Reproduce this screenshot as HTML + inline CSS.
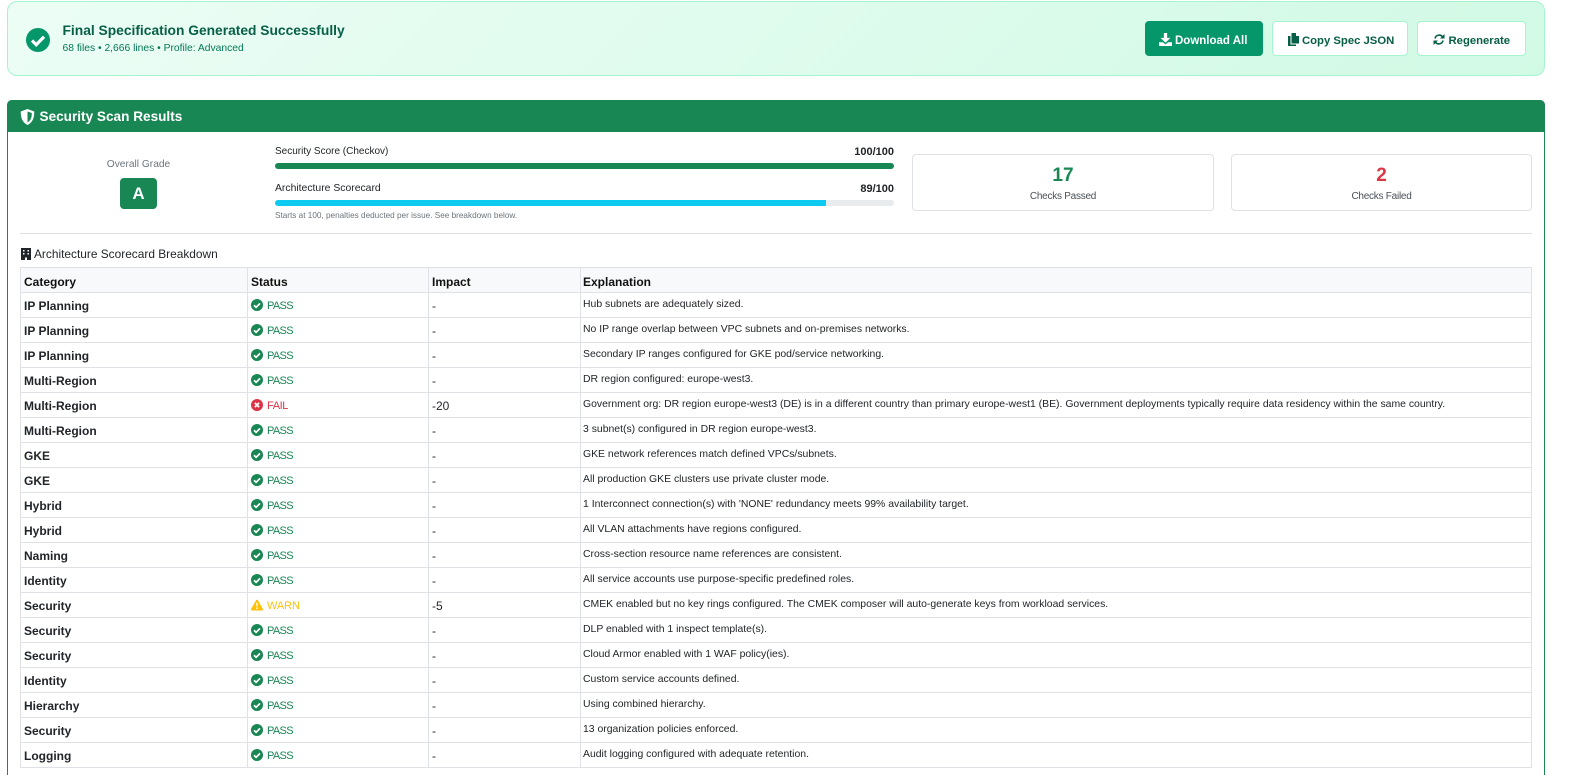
<!DOCTYPE html>
<html lang="en"><head><meta charset="utf-8"><title>Security Scan Results</title>
<style>
*{box-sizing:border-box}
html,body{margin:0;padding:0;width:1574px;height:775px;overflow:hidden;background:#fff;font-family:"Liberation Sans",sans-serif;color:#212529}
#root{position:relative;width:1574px;height:775px;overflow:hidden;background:#fff}
.a{position:absolute;white-space:nowrap}
#banner{left:7px;top:1px;width:1538px;height:75px;border:1px solid #a7f3d0;border-radius:10px;background:linear-gradient(135deg,#ecfdf5,#d1fae5)}
.btn{position:absolute;top:21px;height:35px;border-radius:4px;font-weight:bold;line-height:35px;white-space:nowrap;color:#065f46;background:#fff;border:1px solid #a7f3d0}
.btn svg{position:absolute;top:11px}
.btn span{position:absolute;top:1.5px}
#card{left:7px;top:100px;width:1538px;height:675px;border:1px solid #198754;border-bottom:0;border-radius:5px 5px 0 0}
#head{left:7px;top:100px;width:1538px;height:32px;background:#198754;border-radius:5px 5px 0 0}
.bar{position:absolute;height:6px;border-radius:3px;left:275px;width:619px;background:#e9ecef;overflow:hidden}
.bar i{display:block;height:6px}
.stat{position:absolute;top:154px;height:57px;border:1px solid #dee2e6;border-radius:4px;text-align:center}
.stat b{position:absolute;left:0;right:0;top:10px;font-size:19px;line-height:22px}
.stat span{position:absolute;left:0;right:0;top:34.5px;font-size:10px;letter-spacing:-.25px;line-height:14px;color:#495057}
table{position:absolute;left:20px;top:267px;width:1512px;border-collapse:collapse;table-layout:fixed;font-size:10.43px}
tr{height:25px}
td,th{border:1px solid #dee2e6;padding:0 3px;height:25px;line-height:14px;text-align:left;white-space:nowrap;overflow:hidden}
th{background:#f8f9fa;font-size:12px;color:#111;padding-top:3px}
td:nth-child(-n+3){padding-top:2px}
td:first-child{font-weight:bold;font-size:12px;color:#212529}
td:nth-child(3){font-size:12px}
.p{color:#198754;font-size:11px;letter-spacing:-.65px}.f{color:#dc3545;font-size:11px;letter-spacing:-.4px}.w{color:#ffc107;font-size:11px;letter-spacing:-.1px}
td svg{vertical-align:-2px;margin-right:4px;width:12px;height:12px}
td.w svg{width:14px;margin-right:3px;margin-left:-1px}
</style></head><body><div id="root">
<svg width="0" height="0" style="position:absolute"><defs>
<symbol id="ok" viewBox="0 0 24 24"><circle cx="12" cy="12" r="12" fill="#198754"/><path d="M6 12.5l4.2 4.2L18 8.8" fill="none" stroke="#fff" stroke-width="3.4"/></symbol>
<symbol id="no" viewBox="0 0 24 24"><circle cx="12" cy="12" r="12" fill="#dc3545"/><path d="M7.8 7.8l8.4 8.4M16.2 7.800l-8.4 8.4" fill="none" stroke="#fff" stroke-width="3.4"/></symbol>
<symbol id="wa" viewBox="0 0 24 24"><path d="M12 1.5c.8 0 1.4.4 1.8 1l10 17.5c.8 1.4-.2 3-1.8 3H2c-1.6 0-2.6-1.6-1.8-3l10-17.5c.4-.6 1-1 1.800-1z" fill="#ffc107"/><path d="M12 7.5v7" stroke="#fff" stroke-width="2.8"/><circle cx="12" cy="18.3" r="1.7" fill="#fff"/></symbol>
</defs></svg>

<div id="banner" class="a"></div>
<svg class="a" style="left:26px;top:28px" width="24" height="24" viewBox="0 0 24 24"><circle cx="12" cy="12" r="12" fill="#059669"/><path d="M6 12.5l4.2 4.2L18 8.8" fill="none" stroke="#fff" stroke-width="3.2"/></svg>
<div class="a" style="left:62.5px;top:22px;font-size:13.8px;line-height:18px;font-weight:bold;color:#065f46">Final Specification Generated Successfully</div>
<div class="a" style="left:62.5px;top:42px;font-size:10.3px;line-height:14px;color:#047857">68 files • 2,666 lines • Profile: Advanced</div>

<div class="btn" style="left:1145px;width:118px;background:#059669;border-color:#059669;color:#fff;font-size:11.5px">
<svg style="left:13px" width="13" height="13" viewBox="0 0 24 24"><path d="M9 0h6v9h6l-9 9-9-9h6z M0 17h7l5 4 5-4h7v7H0z" fill="#fff"/></svg><span style="left:29px">Download All</span></div>
<div class="btn" style="left:1272px;width:136px;font-size:11.3px">
<svg style="left:15px" width="11" height="13" viewBox="0 0 22 26"><path d="M7 0h9v6h6v15H7z M0 6h5v17h11v3H0z" fill="#065f46"/></svg><span style="left:29px">Copy Spec JSON</span></div>
<div class="btn" style="left:1417px;width:109px;font-size:11.3px">
<svg style="left:15px" width="12" height="13" viewBox="0 0 24 24"><path d="M4 10a8.500 8.500 0 0 1 15-3.500M20 14a8.500 8.500 0 0 1-15 3.500" fill="none" stroke="#065f46" stroke-width="3.2"/><path d="M23 1v9h-9zM1 23v-9h9z" fill="#065f46"/></svg><span style="left:30.5px">Regenerate</span></div>

<div id="card" class="a"></div>
<div id="head" class="a"></div>
<svg class="a" style="left:20px;top:109px" width="15" height="16" viewBox="0 0 24 26"><path d="M12 0l11 4c0 10-2 17-11 22C3 21 1 14 1 4z" fill="#fff"/><path d="M12 4l7 2.600c0 7-1.500 12-7 15.400z" fill="#198754"/></svg>
<div class="a" style="left:39.5px;top:108px;font-size:13.6px;line-height:18px;font-weight:bold;color:#fff">Security Scan Results</div>

<div class="a" style="left:20px;width:237px;text-align:center;top:157.5px;font-size:10.2px;line-height:14px;color:#6c757d">Overall Grade</div>
<div class="a" style="left:120px;top:178px;width:37px;height:31px;background:#198754;border-radius:4px;color:#fff;font-weight:bold;font-size:17px;line-height:31px;text-align:center">A</div>

<div class="a" style="left:275px;top:145px;font-size:10px;line-height:14px">Security Score (Checkov)</div>
<div class="a" style="left:794px;width:100px;text-align:right;top:145px;font-size:11px;line-height:14px;font-weight:bold">100/100</div>
<div class="bar" style="top:163px"><i style="width:100%;background:#198754"></i></div>
<div class="a" style="left:275px;top:182px;font-size:10.4px;line-height:14px">Architecture Scorecard</div>
<div class="a" style="left:794px;width:100px;text-align:right;top:182px;font-size:11px;line-height:14px;font-weight:bold">89/100</div>
<div class="bar" style="top:200px"><i style="width:89%;background:#0dcaf0"></i></div>
<div class="a" style="left:275px;top:210px;font-size:8.2px;line-height:12px;color:#6c757d">Starts at 100, penalties deducted per issue. See breakdown below.</div>

<div class="stat" style="left:912px;width:302px"><b style="color:#198754">17</b><span>Checks Passed</span></div>
<div class="stat" style="left:1231px;width:301px"><b style="color:#dc3545">2</b><span>Checks Failed</span></div>

<div class="a" style="left:20px;top:233px;width:1512px;height:1px;background:#dee2e6"></div>
<svg class="a" style="left:20.500px;top:248px" width="10" height="12" viewBox="0 0 10 12"><path fill="#212529" fill-rule="evenodd" d="M0 0h10v12H6V9.500H4V12H0zM2 2v1.500h1.500V2zM6.500 2v1.500H8V2zM2 5v1.500h1.500V5zM6.500 5v1.500H8V5z"/></svg>
<div class="a" style="left:34px;top:247px;font-size:11.9px;line-height:14px;color:#212529">Architecture Scorecard Breakdown</div>

<table>
<colgroup><col style="width:227px"><col style="width:181px"><col style="width:152px"><col></colgroup>
<tr><th>Category</th><th>Status</th><th>Impact</th><th style="padding-left:2px">Explanation</th></tr>
<tr><td>IP Planning</td><td class="p"><svg><use href="#ok"/></svg>PASS</td><td>-</td><td style="padding-left:2px">Hub subnets are adequately sized.</td></tr>
<tr><td>IP Planning</td><td class="p"><svg><use href="#ok"/></svg>PASS</td><td>-</td><td style="padding-left:2px">No IP range overlap between VPC subnets and on-premises networks.</td></tr>
<tr><td>IP Planning</td><td class="p"><svg><use href="#ok"/></svg>PASS</td><td>-</td><td style="padding-left:2px">Secondary IP ranges configured for GKE pod/service networking.</td></tr>
<tr><td>Multi-Region</td><td class="p"><svg><use href="#ok"/></svg>PASS</td><td>-</td><td style="padding-left:2px">DR region configured: europe-west3.</td></tr>
<tr><td>Multi-Region</td><td class="f"><svg><use href="#no"/></svg>FAIL</td><td>-20</td><td style="padding-left:2px">Government org: DR region europe-west3 (DE) is in a different country than primary europe-west1 (BE). Government deployments typically require data residency within the same country.</td></tr>
<tr><td>Multi-Region</td><td class="p"><svg><use href="#ok"/></svg>PASS</td><td>-</td><td style="padding-left:2px">3 subnet(s) configured in DR region europe-west3.</td></tr>
<tr><td>GKE</td><td class="p"><svg><use href="#ok"/></svg>PASS</td><td>-</td><td style="padding-left:2px">GKE network references match defined VPCs/subnets.</td></tr>
<tr><td>GKE</td><td class="p"><svg><use href="#ok"/></svg>PASS</td><td>-</td><td style="padding-left:2px">All production GKE clusters use private cluster mode.</td></tr>
<tr><td>Hybrid</td><td class="p"><svg><use href="#ok"/></svg>PASS</td><td>-</td><td style="padding-left:2px">1 Interconnect connection(s) with 'NONE' redundancy meets 99% availability target.</td></tr>
<tr><td>Hybrid</td><td class="p"><svg><use href="#ok"/></svg>PASS</td><td>-</td><td style="padding-left:2px">All VLAN attachments have regions configured.</td></tr>
<tr><td>Naming</td><td class="p"><svg><use href="#ok"/></svg>PASS</td><td>-</td><td style="padding-left:2px">Cross-section resource name references are consistent.</td></tr>
<tr><td>Identity</td><td class="p"><svg><use href="#ok"/></svg>PASS</td><td>-</td><td style="padding-left:2px">All service accounts use purpose-specific predefined roles.</td></tr>
<tr><td>Security</td><td class="w"><svg><use href="#wa"/></svg>WARN</td><td>-5</td><td style="padding-left:2px">CMEK enabled but no key rings configured. The CMEK composer will auto-generate keys from workload services.</td></tr>
<tr><td>Security</td><td class="p"><svg><use href="#ok"/></svg>PASS</td><td>-</td><td style="padding-left:2px">DLP enabled with 1 inspect template(s).</td></tr>
<tr><td>Security</td><td class="p"><svg><use href="#ok"/></svg>PASS</td><td>-</td><td style="padding-left:2px">Cloud Armor enabled with 1 WAF policy(ies).</td></tr>
<tr><td>Identity</td><td class="p"><svg><use href="#ok"/></svg>PASS</td><td>-</td><td style="padding-left:2px">Custom service accounts defined.</td></tr>
<tr><td>Hierarchy</td><td class="p"><svg><use href="#ok"/></svg>PASS</td><td>-</td><td style="padding-left:2px">Using combined hierarchy.</td></tr>
<tr><td>Security</td><td class="p"><svg><use href="#ok"/></svg>PASS</td><td>-</td><td style="padding-left:2px">13 organization policies enforced.</td></tr>
<tr><td>Logging</td><td class="p"><svg><use href="#ok"/></svg>PASS</td><td>-</td><td style="padding-left:2px">Audit logging configured with adequate retention.</td></tr>
</table>
</div></body></html>
